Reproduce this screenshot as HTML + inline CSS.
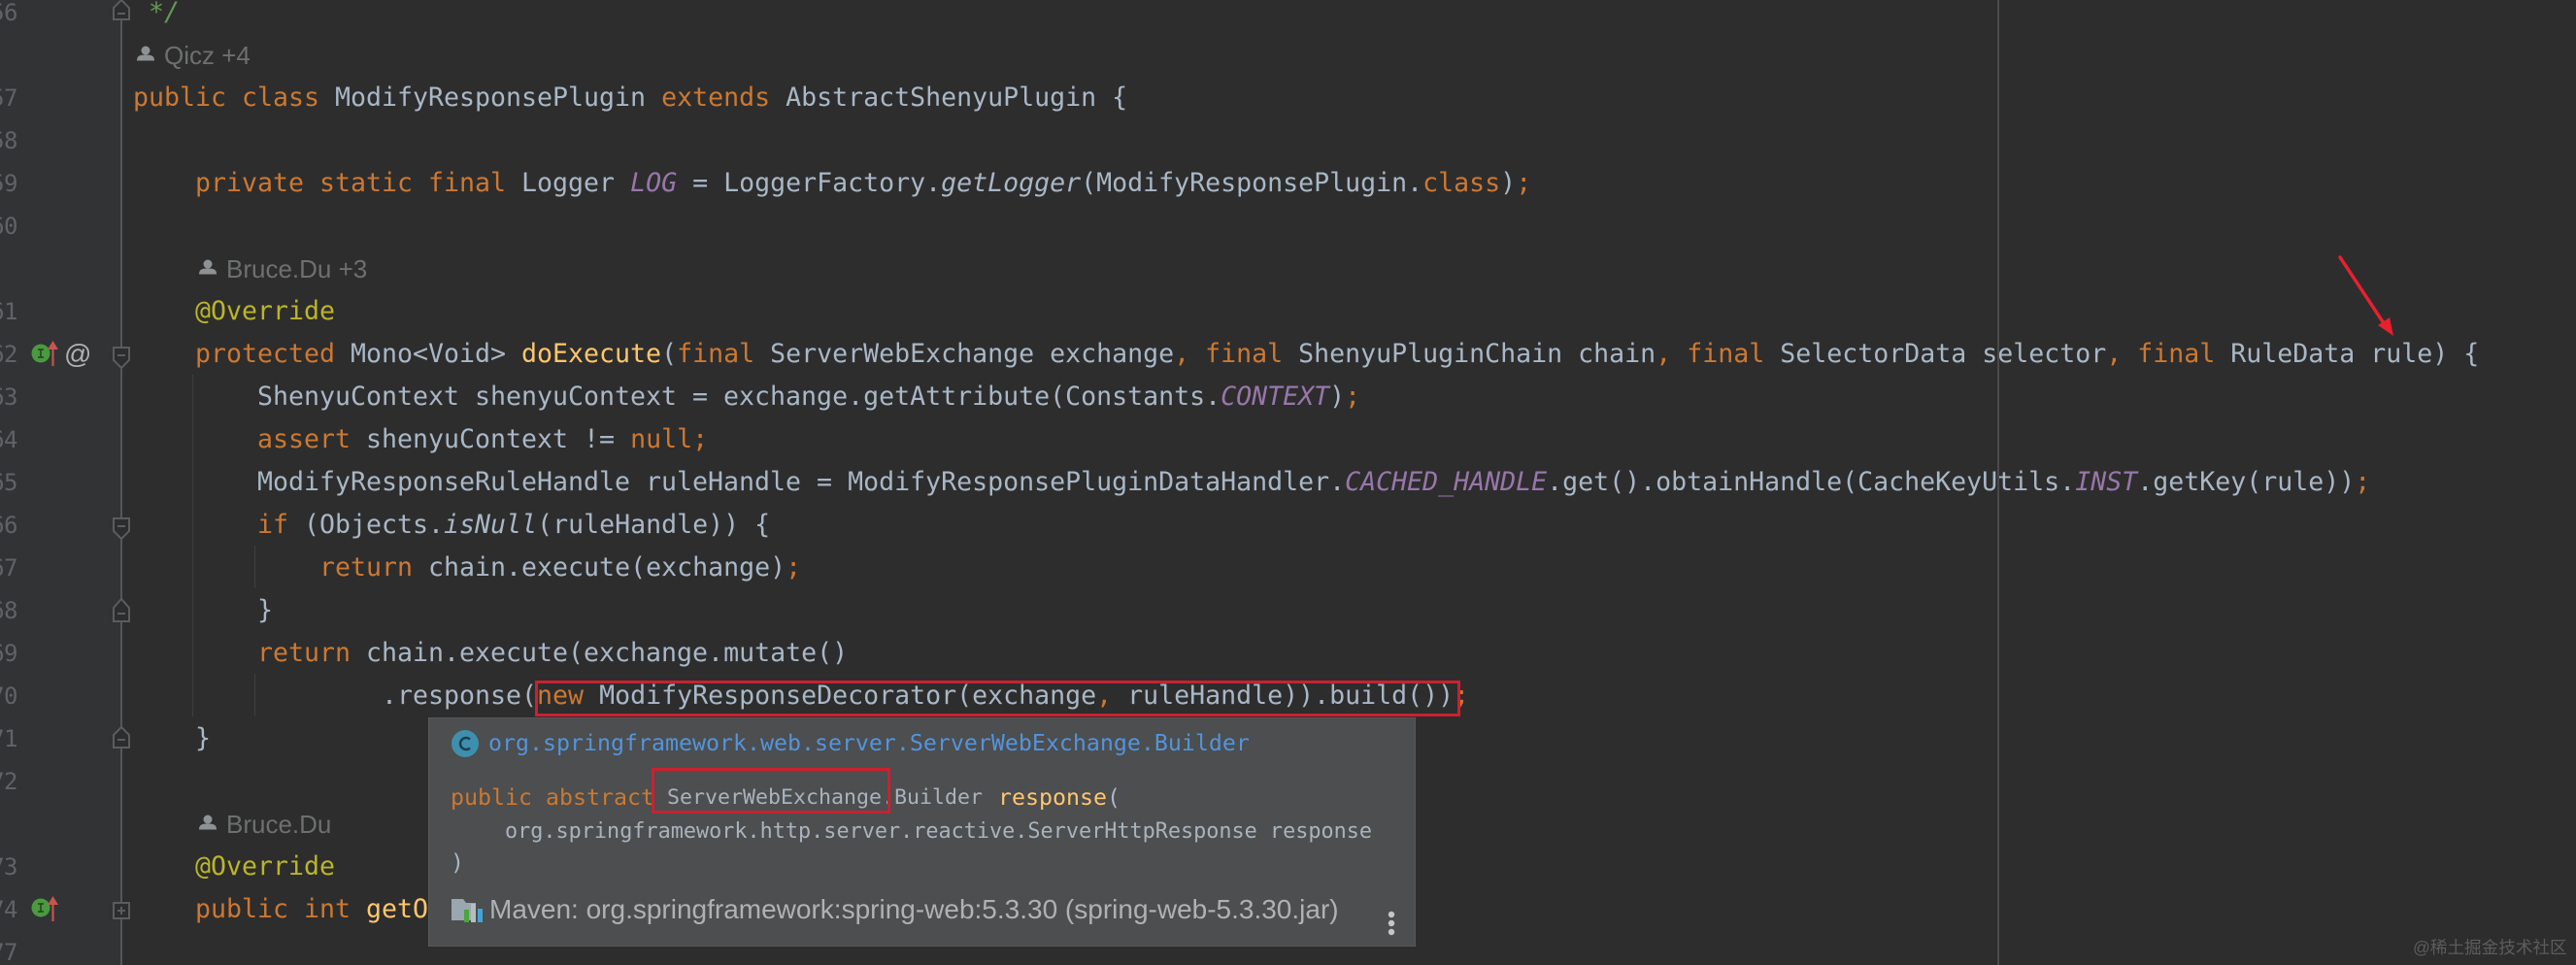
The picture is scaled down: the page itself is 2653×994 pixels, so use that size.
<!DOCTYPE html>
<html><head><meta charset="utf-8">
<style>
html,body{margin:0;padding:0;background:#2d2d2d}
#p{position:relative;width:2653px;height:994px;overflow:hidden;background:#2d2d2d;font-family:"DejaVu Sans Mono","Liberation Mono",monospace;font-size:26.58px;color:#a9b7c6;filter:blur(.35px)}
.g{position:absolute;left:0;top:0;width:124px;height:994px;background:#313335}
.l{position:absolute;left:137px;height:44px;line-height:44px;white-space:pre}
.n{position:absolute;left:-40px;width:58px;text-align:right;height:44px;line-height:44px;color:#606366;font-size:24px;letter-spacing:-.5px}
.a{position:absolute;height:44px;line-height:44px;font-family:"Liberation Sans",sans-serif;font-size:26px;color:#6d6f70;white-space:pre}
.k{color:#cc7832}.m{color:#ffc66d}.y{color:#bbb529}.c{color:#9876aa;font-style:italic}.i{font-style:italic}.gr{color:#629755;font-style:italic}
.t{position:absolute;left:441px;top:739px;width:1017px;height:236px;background:#4c4e4f;box-shadow:inset 0 0 0 1px #565859}
.tl{position:absolute;white-space:pre;height:36px;line-height:36px;font-size:23.26px}
.sm{font-size:21.6px;color:#a9b3bd}
.r{position:absolute;border:3px solid #cc2030;box-sizing:border-box}
.w{position:absolute;left:2485px;top:964px;font-family:"Liberation Sans","Noto Sans CJK SC",sans-serif;font-size:17.6px;line-height:24px;color:#5c5c5c;white-space:pre}
svg{position:absolute;left:0;top:0}
</style></head><body>
<div id="p">
<div class="g"></div>
<div class="n" style="top:-9px">56</div>
<div class="n" style="top:79px">57</div>
<div class="n" style="top:123px">58</div>
<div class="n" style="top:167px">59</div>
<div class="n" style="top:211px">60</div>
<div class="n" style="top:299px">61</div>
<div class="n" style="top:343px">62</div>
<div class="n" style="top:387px">63</div>
<div class="n" style="top:431px">64</div>
<div class="n" style="top:475px">65</div>
<div class="n" style="top:519px">66</div>
<div class="n" style="top:563px">67</div>
<div class="n" style="top:607px">68</div>
<div class="n" style="top:651px">69</div>
<div class="n" style="top:695px">70</div>
<div class="n" style="top:739px">71</div>
<div class="n" style="top:783px">72</div>
<div class="n" style="top:871px">73</div>
<div class="n" style="top:915px">74</div>
<div class="n" style="top:959px">77</div>

<div class="l" style="top:-9px"><span class="gr"> */</span></div>
<div class="a" style="left:169px;top:35px">Qicz +4</div>
<div class="l" style="top:79px"><span class="k">public class </span>ModifyResponsePlugin <span class="k">extends </span>AbstractShenyuPlugin {</div>
<div class="l" style="top:167px">    <span class="k">private static final </span>Logger <span class="c">LOG</span> = LoggerFactory.<span class="i">getLogger</span>(ModifyResponsePlugin.<span class="k">class</span>)<span class="k">;</span></div>
<div class="a" style="left:233px;top:255px">Bruce.Du +3</div>
<div class="l" style="top:299px">    <span class="y">@Override</span></div>
<div class="l" style="top:343px">    <span class="k">protected </span>Mono&lt;Void&gt; <span class="m">doExecute</span>(<span class="k">final </span>ServerWebExchange exchange<span class="k">, final </span>ShenyuPluginChain chain<span class="k">, final </span>SelectorData selector<span class="k">, final </span>RuleData rule) {</div>
<div class="l" style="top:387px">        ShenyuContext shenyuContext = exchange.getAttribute(Constants.<span class="c">CONTEXT</span>)<span class="k">;</span></div>
<div class="l" style="top:431px">        <span class="k">assert </span>shenyuContext != <span class="k">null;</span></div>
<div class="l" style="top:475px">        ModifyResponseRuleHandle ruleHandle = ModifyResponsePluginDataHandler.<span class="c">CACHED_HANDLE</span>.get().obtainHandle(CacheKeyUtils.<span class="c">INST</span>.getKey(rule))<span class="k">;</span></div>
<div class="l" style="top:519px">        <span class="k">if </span>(Objects.<span class="i">isNull</span>(ruleHandle)) {</div>
<div class="l" style="top:563px">            <span class="k">return </span>chain.execute(exchange)<span class="k">;</span></div>
<div class="l" style="top:607px">        }</div>
<div class="l" style="top:651px">        <span class="k">return </span>chain.execute(exchange.mutate()</div>
<div class="l" style="top:695px">                .response(<span class="k">new </span>ModifyResponseDecorator(exchange<span class="k">, </span>ruleHandle)).build())<span class="k">;</span></div>
<div class="l" style="top:739px">    }</div>
<div class="a" style="left:233px;top:827px">Bruce.Du</div>
<div class="l" style="top:871px">    <span class="y">@Override</span></div>
<div class="l" style="top:915px">    <span class="k">public int </span><span class="m">getOrder</span>() {</div>

<svg width="2653" height="994" viewBox="0 0 2653 994">
<rect x="2057" y="0" width="2" height="994" fill="#4a4a4a"/>
<rect x="198" y="386" width="1" height="352" fill="#3f3f3f"/>
<rect x="262" y="562" width="1" height="44" fill="#3f3f3f"/>
<rect x="262" y="694" width="1" height="44" fill="#3f3f3f"/>
<rect x="124" y="0" width="2" height="994" fill="#555759"/>
<g fill="#2d2d2d" stroke="#5a5c5e" stroke-width="2">
<path d="M117 20V8L125 0L133 8V20Z"/>
<path d="M117 358H133V371L125 379L117 371Z"/>
<path d="M117 534H133V547L125 555L117 547Z"/>
<path d="M117 640V626L125 617L133 626V640Z"/>
<path d="M117 770V757L125 749L133 757V770Z"/>
<path d="M117 930H133V946H117Z"/>
</g>
<g stroke="#5a5c5e" stroke-width="2">
<path d="M121 14H129M121 366H129M121 542H129M121 632H129M121 762H129M121 938H129M125 934V942"/>
</g>
<g>
<circle cx="42" cy="364" r="9.5" fill="#4a9a3e"/>
<path d="M39 360H45M42 360V368M39 368H45" stroke="#26401f" stroke-width="1.5" fill="none"/>
<path d="M54.500 377V357" stroke="#c75450" stroke-width="2.200"/>
<path d="M49 360L54.500 351L60 360Z" fill="#c75450"/>
<circle cx="42" cy="935" r="9.5" fill="#4a9a3e"/>
<path d="M39 931H45M42 931V939M39 939H45" stroke="#26401f" stroke-width="1.5" fill="none"/>
<path d="M54.500 949V929" stroke="#c75450" stroke-width="2.200"/>
<path d="M49 932L54.500 923L60 932Z" fill="#c75450"/>
</g>
<text x="66" y="374" font-family="Liberation Sans, sans-serif" font-size="28" fill="#afb1b3">@</text>
<g fill="#8f9294">
<circle cx="150" cy="52" r="4.500"/><path d="M141 62.500C141 57 145 56.500 150 56.500S159 57 159 62.500Z"/>
<circle cx="214" cy="272" r="4.500"/><path d="M205 282.500C205 277 209 276.500 214 276.500S223 277 223 282.500Z"/>
<circle cx="214" cy="844" r="4.500"/><path d="M205 854.500C205 849 209 848.500 214 848.500S223 849 223 854.500Z"/>
</g>
<path d="M2410 265L2457 336" stroke="#e8202e" stroke-width="3.500" stroke-linecap="round"/>
<path d="M2465 346L2449 335L2461 327Z" fill="#e8202e"/>
</svg>

<div class="r" style="left:551px;top:701px;width:953px;height:37px"></div>

<div class="t"></div>
<div class="tl" style="left:503px;top:748px;color:#5394dc">org.springframework.web.server.ServerWebExchange.Builder</div>
<div class="tl" style="left:464px;top:804px"><span class="k">public abstract </span></div>
<div class="tl sm" style="left:687px;top:804px">ServerWebExchange.Builder</div>
<div class="tl" style="left:1028px;top:804px"><span class="m">response</span>(</div>
<div class="tl sm" style="left:520px;top:839px;font-size:21.82px">org.springframework.http.server.reactive.ServerHttpResponse response</div>
<div class="tl" style="left:464px;top:871px">)</div>
<div class="tl" style="left:504px;top:919px;font-family:'Liberation Sans',sans-serif;font-size:28px;color:#afb1b3">Maven: org.springframework:spring-web:5.3.30 (spring-web-5.3.30.jar)</div>

<svg width="2653" height="994" viewBox="0 0 2653 994">
<circle cx="479" cy="766" r="14" fill="#3e8fae"/>
<path d="M484 761.500A6 6 0 1 0 484 770.500" fill="none" stroke="#1f3d50" stroke-width="2.500"/>
<path d="M465 926H477L480 930H490V948H465Z" fill="#9aa7b0"/>
<rect x="478" y="937" width="5" height="13" fill="#4aa53e"/>
<rect x="485" y="931" width="5" height="19" fill="#b8bcbf"/>
<rect x="492" y="936" width="5" height="14" fill="#3fa6d8"/>
<g fill="#c4c6c8"><circle cx="1433" cy="942" r="3.200"/><circle cx="1433" cy="951" r="3.200"/><circle cx="1433" cy="960" r="3.200"/></g>
</svg>
<div class="r" style="left:671px;top:791px;width:246px;height:47px"></div>
<div class="w">@稀土掘金技术社区</div>
</div>
</body></html>
